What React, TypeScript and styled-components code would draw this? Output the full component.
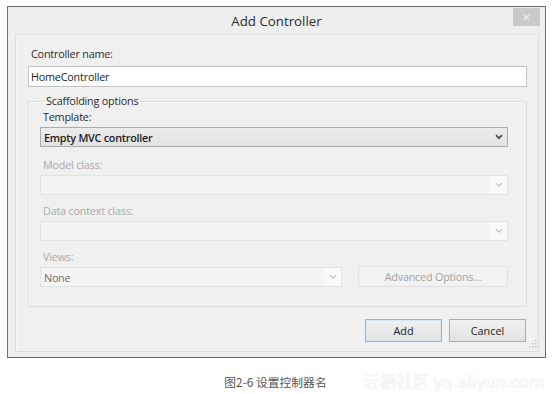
import React from "react";
import styled, { createGlobalStyle } from "styled-components";

const Global = createGlobalStyle`
  html, body { margin: 0; padding: 0; background: #fff; }
  body { font-family: "Open Sans", "Noto Sans", sans-serif; }
`;

const Page = styled.div`
  position: relative;
  width: 555px;
  height: 394px;
  padding: 6px 0 0 7px;
  box-sizing: border-box;
`;

const Dialog = styled.div`
  width: 539px;
  height: 352px;
  box-sizing: border-box;
  border: 1px solid #6e6e6e;
  background: #efefef;
  display: flex;
  flex-direction: column;
`;

const TitleBar = styled.div`
  position: relative;
  height: 27px;
  flex: none;
  display: flex;
  align-items: center;
  justify-content: center;
  font-size: 13.3px;
  color: #2b2b2b;
  padding-top: 1px;
  box-sizing: border-box;
`;

const CloseBtn = styled.div`
  position: absolute;
  right: 5px;
  top: 1px;
  width: 27px;
  height: 18px;
  background: #c9c9c9;
  color: #f6f6f6;
  display: flex;
  align-items: center;
  justify-content: center;
  font-size: 10px;
  font-family: "DejaVu Sans", sans-serif;
`;

const Panel = styled.div`
  flex: 1;
  margin: 0 6px 5px 7px;
  border: 1px solid #dcdcdc;
  background: #f0f0f0;
  box-shadow: inset 1px 1px 0 #f8f8f8;
  padding: 11px 11px 0 12px;
  display: flex;
  flex-direction: column;
`;

const Label = styled.div<{ $disabled?: boolean; $indent?: number }>`
  font-size: 10.8px;
  line-height: 16px;
  color: ${(p) => (p.$disabled ? "#a9a9a9" : "#2a2a2a")};
  padding-left: ${(p) => p.$indent ?? 3}px;
  letter-spacing: -0.2px;
`;

const TextInput = styled.div`
  margin-top: 4px;
  height: 21px;
  box-sizing: border-box;
  border: 1px solid #c2c2c2;
  background: #fff;
  font-size: 10.8px;
  line-height: 19px;
  padding-left: 2px;
  color: #1e1e1e;
  letter-spacing: -0.2px;
`;

const Group = styled.fieldset`
  margin: 7px 0 0 0;
  padding: 0 18px 0 11px;
  border: 1px solid #dcdcdc;
  box-shadow: inset 1px 1px 0 #f8f8f8;
  height: 213px;
  box-sizing: border-box;
  min-width: 0;
`;

const Legend = styled.legend`
  font-size: 10.8px;
  color: #2a2a2a;
  padding: 0 2px;
  margin-left: 4px;
  line-height: 14px;
  letter-spacing: -0.2px;
`;

const Field = styled.div<{ $top: number }>`
  margin-top: ${(p) => p.$top}px;
  display: flex;
  flex-direction: column;
`;

const Select = styled.div<{ $disabled?: boolean; $width?: number }>`
  margin-top: 2px;
  height: 20px;
  box-sizing: border-box;
  width: ${(p) => (p.$width ? `${p.$width}px` : "100%")};
  border: 1px solid ${(p) => (p.$disabled ? "#e2e2e2" : "#acacac")};
  background: ${(p) =>
    p.$disabled ? "#f4f4f4" : "linear-gradient(#ececec, #e2e2e2)"};
  display: flex;
  align-items: center;
  justify-content: space-between;
  font-size: 10.8px;
  font-weight: ${(p) => (p.$disabled ? 400 : 600)};
  color: ${(p) => (p.$disabled ? "#6f6f6f" : "#1e1e1e")};
  padding-left: 3px;
  letter-spacing: -0.25px;
`;

const Chevron = styled.div<{ $disabled?: boolean }>`
  width: 17px;
  height: 18px;
  display: flex;
  align-items: center;
  justify-content: center;
  background: ${(p) => (p.$disabled ? "#fafafa" : "transparent")};
`;

const Row = styled.div`
  display: flex;
  align-items: flex-end;
  justify-content: space-between;
`;

const GhostButton = styled.div`
  width: 150px;
  height: 21px;
  box-sizing: border-box;
  border: 1px solid #e0e0e0;
  background: #f2f2f2;
  color: #a2a2a2;
  font-size: 10.8px;
  display: flex;
  align-items: center;
  justify-content: center;
  letter-spacing: -0.2px;
`;

const Footer = styled.div`
  position: relative;
  flex: 1;
  display: flex;
  justify-content: flex-end;
  align-items: flex-start;
  gap: 7px;
  padding: 12px 1px 0 0;
`;

const Button = styled.div<{ $primary?: boolean }>`
  width: 77px;
  height: 23px;
  box-sizing: border-box;
  border: 1px solid ${(p) => (p.$primary ? "#8fb8e0" : "#acacac")};
  box-shadow: ${(p) => (p.$primary ? "inset 0 0 0 1px #d6e6f5" : "none")};
  background: linear-gradient(#f0f0f0, #e3e3e3);
  font-size: 10.8px;
  color: #222;
  display: flex;
  align-items: center;
  justify-content: center;
`;

const Grip = styled.svg`
  position: absolute;
  right: -10px;
  bottom: 3px;
`;

const Caption = styled.div`
  margin-top: 15px;
  margin-left: -7px;
  width: 555px;
  text-align: center;
  font-family: "Noto Sans CJK SC", sans-serif;
  font-size: 11.8px;
  color: #555;
  padding-right: 4px;
  box-sizing: border-box;
`;

const Watermark = styled.div`
  position: absolute;
  left: 363px;
  top: 369px;
  font-family: "Noto Sans CJK SC", sans-serif;
  font-size: 16.5px;
  color: #fbfbfb;
  text-shadow: 0 0 1px #d0d0d0;
  white-space: nowrap;
  letter-spacing: 0.2px;
`;

const ChevronIcon = ({ disabled }: { disabled?: boolean }) => (
  <Chevron $disabled={disabled}>
    <svg width="8" height="6" viewBox="0 0 8 6">
      <path
        d="M1 1.2 L4 4.2 L7 1.2"
        fill="none"
        stroke={disabled ? "#bdbdbd" : "#4a4a4a"}
        strokeWidth={disabled ? 1.2 : 1.7}
      />
    </svg>
  </Chevron>
);

export default function App() {
  return (
    <>
      <Global />
      <Page>
        <Dialog>
          <TitleBar>
            Add Controller
            <CloseBtn>✕</CloseBtn>
          </TitleBar>
          <Panel>
            <Label>Controller name:</Label>
            <TextInput>HomeController</TextInput>
            <Group>
              <Legend>Scaffolding options</Legend>
              <Field $top={1}>
                <Label>Template:</Label>
                <Select>
                  Empty MVC controller
                  <ChevronIcon />
                </Select>
              </Field>
              <Field $top={10}>
                <Label $disabled>Model class:</Label>
                <Select $disabled>
                  <span />
                  <ChevronIcon disabled />
                </Select>
              </Field>
              <Field $top={8}>
                <Label $disabled>Data context class:</Label>
                <Select $disabled>
                  <span />
                  <ChevronIcon disabled />
                </Select>
              </Field>
              <Row>
                <Field $top={8}>
                  <Label $disabled>Views:</Label>
                  <Select $disabled $width={302}>
                    None
                    <ChevronIcon disabled />
                  </Select>
                </Field>
                <GhostButton>Advanced Options...</GhostButton>
              </Row>
            </Group>
            <Footer>
              <Button $primary>Add</Button>
              <Button>Cancel</Button>
              <Grip width="8" height="8" viewBox="0 0 8 8">
                <g fill="#c4c4c4">
                  <rect x="6" y="0" width="1.5" height="1.5" />
                  <rect x="3" y="3" width="1.5" height="1.5" />
                  <rect x="6" y="3" width="1.5" height="1.5" />
                  <rect x="0" y="6" width="1.5" height="1.5" />
                  <rect x="3" y="6" width="1.5" height="1.5" />
                  <rect x="6" y="6" width="1.5" height="1.5" />
                </g>
              </Grip>
            </Footer>
          </Panel>
        </Dialog>
        <Caption>图2-6 设置控制器名</Caption>
        <Watermark>云栖社区 yq.aliyun.com</Watermark>
      </Page>
    </>
  );
}
